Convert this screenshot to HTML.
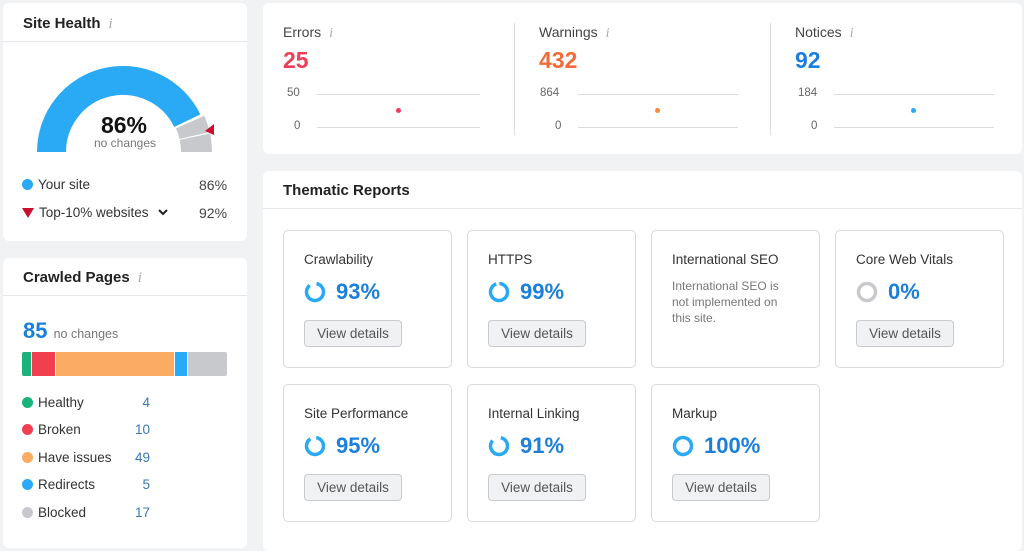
<!DOCTYPE html>
<html><head><meta charset="utf-8"><style>
*{margin:0;padding:0;box-sizing:border-box}
body{width:1024px;height:541px;background:#f1f2f4;font-family:"Liberation Sans",sans-serif;color:#333;position:relative;overflow:hidden}
.a{position:absolute}
.card{position:absolute;background:#fff;border-radius:6px}
.hdr{position:absolute;left:0;right:0;border-bottom:1px solid #e6e7ea}
.t{font-weight:bold;font-size:15px;color:#222}
.i{font-family:"Liberation Serif",serif;font-style:italic;color:#aaa;font-size:15px;margin-left:8px;font-weight:normal}
.sub{position:absolute;background:#fff;border:1px solid #d8d9dc;border-radius:5px;width:169px;height:138px}
.st{position:absolute;left:20px;top:21px;font-size:13.5px;color:#333}
.pc{position:absolute;left:20px;top:48px;font-size:22px;font-weight:bold;color:#1a80dc;display:flex;align-items:center}
.pc svg{margin-right:10px}
.btn{position:absolute;left:20px;top:89px;width:98px;height:27px;border:1px solid #c9cacd;background:#f0f1f2;border-radius:4px;font-size:13.5px;color:#555;text-align:center;line-height:25px}
.leg{position:absolute;left:22px;font-size:13.5px;color:#333;display:flex;align-items:center}
.dot{width:11px;height:11px;border-radius:50%;margin-right:5px}
.num{position:absolute;font-size:13.5px;color:#3a78b8;text-align:right;width:40px;left:110px}
.lbl{font-size:14px;color:#444}
.ax{font-size:11.5px;color:#666;position:absolute}
.ln{position:absolute;height:1px;background:#ddd}
</style></head><body>

<div class="card" style="left:3px;top:3px;width:244px;height:238px">
 <div class="hdr" style="top:0;height:39px"></div>
 <div class="a t" style="left:20px;top:12px">Site Health<span class="i">i</span></div>
 <svg class="a" style="left:-3px;top:-3px" width="250" height="200">
  <path d="M51.5 152 A71.5 71.5 0 0 1 187.3 120.7" stroke="#2aaaf5" stroke-width="29" fill="none"/>
  <path d="M204.3 115.8 A89 89 0 0 1 209.7 132 L179.5 139 A58 58 0 0 0 176 128.4Z" fill="#c8c9cd"/>
  <path d="M210 133.5 A90 90 0 0 1 212 152 L181 152 A58 58 0 0 0 179.7 139.9Z" fill="#c8c9cd"/>
  <path d="M205 131 L214 124 L214 135Z" fill="#c8102e"/>
  <text x="124" y="133" text-anchor="middle" font-family="Liberation Sans" font-weight="bold" font-size="23" fill="#111">86%</text>
  <text x="125" y="147" text-anchor="middle" font-family="Liberation Sans" font-size="12" fill="#777">no changes</text>
 </svg>
 <div class="leg" style="top:174px;left:19px"><div class="dot" style="background:#2aaaf5"></div>Your site</div>
 <div class="a lbl" style="left:196px;top:174px">86%</div>
 <div class="leg" style="top:202px;left:19px"><svg width="12" height="10" style="margin-right:5px"><path d="M0 0 L12 0 L6 10Z" fill="#c8102e"/></svg>Top-10% websites <svg width="10" height="7" style="margin-left:9px"><path d="M1 1 L5 5 L9 1" stroke="#222" stroke-width="2" fill="none"/></svg></div>
 <div class="a lbl" style="left:196px;top:202px">92%</div>
</div>

<div class="card" style="left:3px;top:258px;width:244px;height:290px">
 <div class="hdr" style="top:0;height:38px"></div>
 <div class="a t" style="left:20px;top:11px">Crawled Pages<span class="i">i</span></div>
 <div class="a" style="left:20px;top:60px;font-size:22px;font-weight:bold;color:#1a80dc">85 <span style="font-size:12.5px;font-weight:normal;color:#777">no changes</span></div>
 <div class="a" style="left:19px;top:94px;width:205px;height:24px;display:flex;border-radius:2px;overflow:hidden">
  <div style="width:9px;background:#18b47a;margin-right:1px"></div>
  <div style="width:23px;background:#f0404f;margin-right:1px"></div>
  <div style="width:118px;background:#fbab62;margin-right:1px"></div>
  <div style="width:12px;background:#2aaaf5;margin-right:1px"></div>
  <div style="flex:1;background:#c8c9cd"></div>
 </div>
 <div class="leg" style="top:137px;left:19px"><div class="dot" style="background:#18b47a"></div>Healthy</div><div class="num" style="top:137px;left:107px">4</div>
 <div class="leg" style="top:164px;left:19px"><div class="dot" style="background:#f0404f"></div>Broken</div><div class="num" style="top:164px;left:107px">10</div>
 <div class="leg" style="top:192px;left:19px"><div class="dot" style="background:#fbab62"></div>Have issues</div><div class="num" style="top:192px;left:107px">49</div>
 <div class="leg" style="top:219px;left:19px"><div class="dot" style="background:#2aaaf5"></div>Redirects</div><div class="num" style="top:219px;left:107px">5</div>
 <div class="leg" style="top:247px;left:19px"><div class="dot" style="background:#c8c9cd"></div>Blocked</div><div class="num" style="top:247px;left:107px">17</div>
</div>

<div class="card" style="left:263px;top:3px;width:759px;height:151px">
 <div class="a" style="left:251px;top:20px;width:1px;height:112px;background:#ddd"></div>
 <div class="a" style="left:507px;top:20px;width:1px;height:112px;background:#ddd"></div>
 <div class="a lbl" style="left:20px;top:21px">Errors<span class="i" style="font-size:14px">i</span></div>
 <div class="a" style="left:20px;top:44px;font-size:23px;font-weight:bold;color:#ef3e56">25</div>
 <div class="ax" style="left:24px;top:84px">50</div><div class="ln" style="left:54px;top:91px;width:163px"></div>
 <div class="ax" style="left:31px;top:117px">0</div><div class="ln" style="left:54px;top:124px;width:163px"></div>
 <div class="a" style="left:133px;top:105px;width:5px;height:5px;border-radius:50%;background:#ef3e56"></div>
 <div class="a lbl" style="left:276px;top:21px">Warnings<span class="i" style="font-size:14px">i</span></div>
 <div class="a" style="left:276px;top:44px;font-size:23px;font-weight:bold;color:#f26b3a">432</div>
 <div class="ax" style="left:277px;top:84px">864</div><div class="ln" style="left:315px;top:91px;width:160px"></div>
 <div class="ax" style="left:292px;top:117px">0</div><div class="ln" style="left:315px;top:124px;width:160px"></div>
 <div class="a" style="left:392px;top:105px;width:5px;height:5px;border-radius:50%;background:#f58a3a"></div>
 <div class="a lbl" style="left:532px;top:21px">Notices<span class="i" style="font-size:14px">i</span></div>
 <div class="a" style="left:532px;top:44px;font-size:23px;font-weight:bold;color:#1a80dc">92</div>
 <div class="ax" style="left:535px;top:84px">184</div><div class="ln" style="left:571px;top:91px;width:160px"></div>
 <div class="ax" style="left:548px;top:117px">0</div><div class="ln" style="left:571px;top:124px;width:160px"></div>
 <div class="a" style="left:648px;top:105px;width:5px;height:5px;border-radius:50%;background:#2aaaf5"></div>
</div>

<div class="card" style="left:263px;top:171px;width:759px;height:380px">
 <div class="hdr" style="top:0;height:38px"></div>
 <div class="a t" style="left:20px;top:11px">Thematic Reports</div>
</div>

<div class="sub" style="left:283px;top:230px"><div class="st">Crawlability</div>
 <div class="pc"><svg width="22" height="22"><circle cx="11" cy="11" r="8.5" fill="none" stroke="#2aaaf5" stroke-width="3.5" stroke-dasharray="46 7.4" transform="rotate(-80 11 11)"/></svg>93%</div>
 <div class="btn">View details</div></div>
<div class="sub" style="left:467px;top:230px"><div class="st">HTTPS</div>
 <div class="pc"><svg width="22" height="22"><circle cx="11" cy="11" r="8.5" fill="none" stroke="#2aaaf5" stroke-width="3.5" stroke-dasharray="50 3.4" transform="rotate(-88 11 11)"/></svg>99%</div>
 <div class="btn">View details</div></div>
<div class="sub" style="left:651px;top:230px"><div class="st">International SEO</div>
 <div class="a" style="left:20px;top:47px;font-size:12px;color:#777;line-height:16px;width:118px">International SEO is not implemented on this site.</div></div>
<div class="sub" style="left:835px;top:230px"><div class="st">Core Web Vitals</div>
 <div class="pc"><svg width="22" height="22"><circle cx="11" cy="11" r="8.5" fill="none" stroke="#c8c9cd" stroke-width="3.5"/></svg>0%</div>
 <div class="btn">View details</div></div>
<div class="sub" style="left:283px;top:384px"><div class="st">Site Performance</div>
 <div class="pc"><svg width="22" height="22"><circle cx="11" cy="11" r="8.5" fill="none" stroke="#2aaaf5" stroke-width="3.5" stroke-dasharray="47 6.4" transform="rotate(-82 11 11)"/></svg>95%</div>
 <div class="btn">View details</div></div>
<div class="sub" style="left:467px;top:384px"><div class="st">Internal Linking</div>
 <div class="pc"><svg width="22" height="22"><circle cx="11" cy="11" r="8.5" fill="none" stroke="#2aaaf5" stroke-width="3.5" stroke-dasharray="44 9.4" transform="rotate(-78 11 11)"/></svg>91%</div>
 <div class="btn">View details</div></div>
<div class="sub" style="left:651px;top:384px"><div class="st">Markup</div>
 <div class="pc"><svg width="22" height="22"><circle cx="11" cy="11" r="8.5" fill="none" stroke="#2aaaf5" stroke-width="3.5"/></svg>100%</div>
 <div class="btn">View details</div></div>

</body></html>
